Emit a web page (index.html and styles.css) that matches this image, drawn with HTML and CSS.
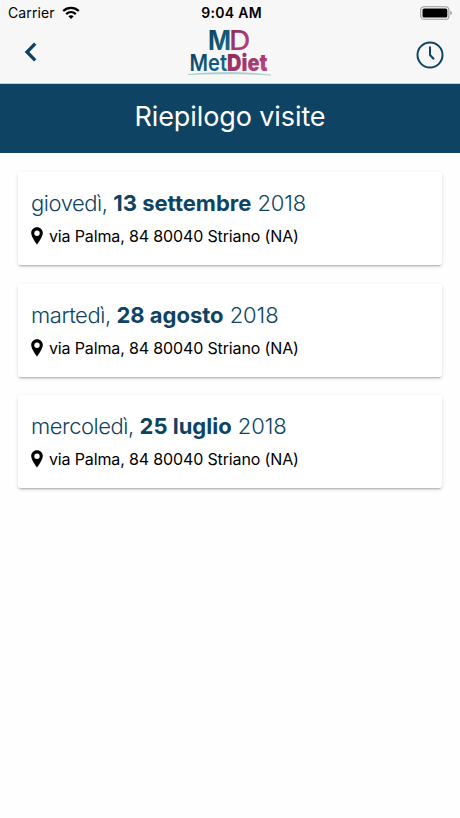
FILE: index.html
```html
<!DOCTYPE html>
<html lang="it">
<head>
    <meta charset="UTF-8">
    <meta name="viewport" content="width=device-width, initial-scale=1.0">
    <title>MetDiet | Riepilogo visite</title>
    <link rel="stylesheet" href="styles.css">
</head>
<body>

<svg class="defs" width="0" height="0">
    <symbol id="pin" viewBox="0 0 12 18">
        <path fill-rule="evenodd" d="M6 0.3C2.7 0.3 0.2 2.8 0.2 6C0.2 10.2 6 17.5 6 17.5S11.8 10.2 11.8 6C11.8 2.8 9.3 0.3 6 0.3ZM6 3.5A2.7 2.7 0 1 1 6 8.9A2.7 2.7 0 1 1 6 3.5Z"/>
    </symbol>
</svg>

<header class="header">
    <div class="status-bar">
        <div class="carrier">
            <span class="carrier-name">Carrier</span>
            <svg width="18" height="14" viewBox="0 0 18 14">
                <g fill="none" stroke="#000" stroke-width="2.3">
                    <path d="M1.2 5C5.6 0.8 12.4 0.8 16.8 5"/>
                    <path d="M4.2 8.1C7 5.5 11 5.5 13.8 8.1"/>
                </g>
                <path d="M9 13L6.3 10.2C7.8 8.8 10.2 8.8 11.7 10.2Z"/>
            </svg>
        </div>
        <span class="time">9:04 AM</span>
        <svg class="battery" width="33" height="14" viewBox="0 0 33 14">
            <rect x="0.7" y="0.7" width="28.2" height="12.6" rx="3.4" fill="none" stroke="#999" stroke-width="1.1"/>
            <rect x="2.5" y="2.5" width="24.8" height="9" rx="1.5"/>
            <path d="M30.3 4.8C32.3 5.5 32.3 8.5 30.3 9.2Z" fill="#999"/>
        </svg>
    </div>
    <nav class="navbar">
        <a href="#" class="nav-back" aria-label="Indietro">
            <svg width="12" height="20" viewBox="0 0 12 20">
                <path d="M10.2 1.7L2 10L10.2 18.3" fill="none" stroke="#0e4363" stroke-width="3.3"/>
            </svg>
        </a>
        <svg class="logo" width="86" height="50" viewBox="0 0 86 50">
            <defs>
                <linearGradient id="blue" x1="0" y1="0" x2="1" y2="1">
                    <stop offset="0" stop-color="#0b3c5c"/>
                    <stop offset="1" stop-color="#196f91"/>
                </linearGradient>
                <linearGradient id="pink" x1="0" y1="0" x2="1" y2="1">
                    <stop offset="0" stop-color="#872654"/>
                    <stop offset="1" stop-color="#c04a88"/>
                </linearGradient>
            </defs>
            <text class="logo-m" x="21" y="22.5" textLength="23" lengthAdjust="spacingAndGlyphs">M</text>
            <text class="logo-d" x="42" y="22.5" textLength="21.5" lengthAdjust="spacingAndGlyphs">D</text>
            <text class="logo-met" x="2.5" y="44" textLength="37.5" lengthAdjust="spacingAndGlyphs">Met</text>
            <text class="logo-diet" x="40" y="44" textLength="40.5" lengthAdjust="spacingAndGlyphs">Diet</text>
            <path d="M1 47.6C25 44.8 60 44.8 84 48.1C60 46.5 25 46.5 1 47.6Z" fill="#9fcaca" stroke="#9fcaca" stroke-width="0.6"/>
        </svg>
        <a href="#" class="nav-history" aria-label="Cronologia">
            <svg width="28" height="28" viewBox="0 0 28 28" fill="none" stroke="#0e4363" stroke-width="2">
                <circle cx="14" cy="14" r="12.5"/>
                <path d="M14 5.5V14L18 18.3"/>
            </svg>
        </a>
    </nav>
</header>

<h1 class="page-title">Riepilogo visite</h1>

<main class="visits">
    <div class="card">
        <h2 class="date"><span class="day">giovedì, </span><b>13 settembre</b> 2018</h2>
        <p class="address"><svg width="12" height="18"><use href="#pin"/></svg><span>via Palma, 84 80040 Striano (NA)</span></p>
    </div>
    <div class="card">
        <h2 class="date"><span class="day">martedì, </span><b>28 agosto</b> 2018</h2>
        <p class="address"><svg width="12" height="18"><use href="#pin"/></svg><span>via Palma, 84 80040 Striano (NA)</span></p>
    </div>
    <div class="card">
        <h2 class="date"><span class="day">mercoledì, </span><b>25 luglio</b> 2018</h2>
        <p class="address"><svg width="12" height="18"><use href="#pin"/></svg><span>via Palma, 84 80040 Striano (NA)</span></p>
    </div>
</main>

</body>
</html>
```

FILE: styles.css
```css
* {
    box-sizing: border-box;
}
body {
    margin: 0;
    background: #fefefe;
    color: #000;
    font-family: Inter, "Liberation Sans", sans-serif;
}
svg {
    display: block;
    flex-shrink: 0;
    overflow: visible;
}
.defs {
    position: absolute;
}
.header {
    height: 84px;
    background: #f7f7f7;
    border-bottom: 1px solid #c3cdd3;
}
.status-bar {
    display: grid;
    grid-template-columns: 1fr auto 1fr;
    align-items: center;
    height: 26px;
    padding: 0 7px 0 8px;
    font-size: 14px;
}
.carrier {
    display: flex;
    align-items: center;
    gap: 7px;
}
.carrier-name {
    padding-bottom: 1px;
    letter-spacing: 0.1px;
}
.time {
    padding: 0 0 1px 2px;
    font-weight: 600;
    letter-spacing: 0.3px;
}
.battery {
    justify-self: end;
}
.navbar {
    display: grid;
    grid-template-columns: 1fr auto 1fr;
    align-items: center;
    height: 52px;
    padding: 0 16px 0 25px;
}
.nav-history {
    justify-self: end;
    padding-top: 6px;
}
.logo {
    margin-right: 9px;
}
.logo-m,
.logo-met {
    fill: url(#blue);
}
.logo-d,
.logo-diet {
    fill: url(#pink);
}
.logo-m {
    font-size: 27px;
    font-weight: 700;
}
.logo-d {
    font-size: 27px;
    font-weight: 500;
}
.logo-met {
    font-size: 23.5px;
    font-weight: 600;
}
.logo-diet {
    font-size: 23.5px;
    font-weight: 900;
}
.page-title {
    margin: 0;
    height: 69px;
    background: #0e4363;
    color: #fff;
    font-size: 27px;
    font-weight: 400;
    letter-spacing: -0.1px;
    line-height: 66px;
    text-align: center;
}
.visits {
    display: flex;
    flex-direction: column;
    gap: 18.5px;
    padding: 19px 18px;
}
.card {
    height: 93px;
    padding: 17px 13px;
    background: #fff;
    border-radius: 3px;
    box-shadow: 0 2px 2px rgba(0, 0, 0, 0.1), 0 3px 1px -2px rgba(0, 0, 0, 0.14), 0 1px 4px rgba(0, 0, 0, 0.1);
}
.date {
    margin: 0;
    color: #0e4363;
    font-size: 22px;
    font-weight: 300;
    line-height: 28px;
    letter-spacing: -0.1px;
    white-space: nowrap;
}
.day {
    letter-spacing: -0.45px;
}
.date b {
    font-weight: 700;
    letter-spacing: 0;
}
.address {
    display: flex;
    align-items: center;
    gap: 6px;
    margin: 9px 0 0;
    font-size: 16px;
    line-height: 20px;
    letter-spacing: -0.14px;
    white-space: nowrap;
}
```
